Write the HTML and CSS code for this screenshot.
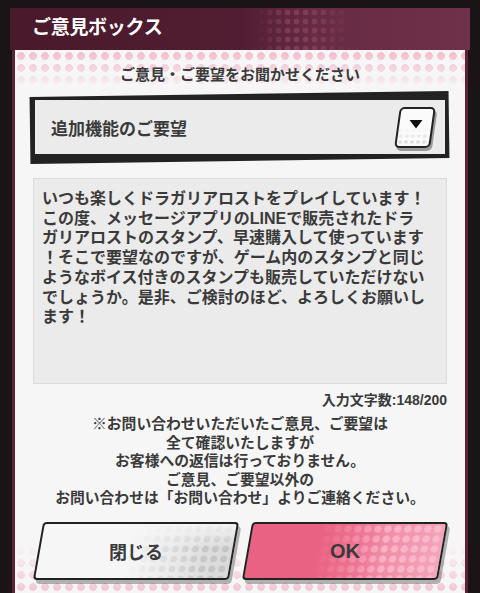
FILE: index.html
```html
<!DOCTYPE html>
<html lang="ja">
<head>
    <meta charset="UTF-8">
    <meta name="viewport" content="width=device-width, initial-scale=1.0">
    <title>ご意見ボックス</title>
    <link rel="stylesheet" href="styles.css">
</head>
<body>
    <div class="dialog">
        <div class="dialog-header">
            <h1>ご意見ボックス</h1>
        </div>

        <div class="dialog-body">
            <div class="content">
                <p class="lead">ご意見・ご要望をお聞かせください</p>

                <div class="select">
                    <div class="select-box">
                        <span>追加機能のご要望</span>
                        <span class="select-arrow">
                            <svg width="15" height="10" viewBox="0 0 15 10"><path d="M1 1h13L7.5 9.5z" fill="#111"/></svg>
                        </span>
                    </div>
                </div>

                <div class="message">いつも楽しくドラガリアロストをプレイしています！<br>この度、メッセージアプリのLINEで販売されたドラ<br>ガリアロストのスタンプ、早速購入して使っています<br>！そこで要望なのですが、ゲーム内のスタンプと同じ<br>ようなボイス付きのスタンプも販売していただけない<br>でしょうか。是非、ご検討のほど、よろしくお願いし<br>ます！</div>

                <p class="counter">入力文字数:148/200</p>

                <p class="notice">
                    ※お問い合わせいただいたご意見、ご要望は<br>
                    全て確認いたしますが<br>
                    お客様への返信は行っておりません。<br>
                    ご意見、ご要望以外の<br>
                    お問い合わせは「お問い合わせ」よりご連絡ください。
                </p>

                <div class="actions">
                    <button class="btn btn-close"><span>閉じる</span></button>
                    <button class="btn btn-ok"><span>OK</span></button>
                </div>
            </div>
        </div>
    </div>
</body>
</html>
```

FILE: styles.css
```css
* {
    margin: 0;
    padding: 0;
    box-sizing: border-box;
}

body {
    width: 480px;
    height: 593px;
    overflow: hidden;
    background: #1b1416;
    font-family: "Liberation Sans", "Noto Sans CJK JP", sans-serif;
    font-weight: 700;
    color: #3a3a3a;
}

.dialog {
    margin: 8px 10px 0;
}

.dialog-header {
    position: relative;
    height: 42px;
    padding-left: 22px;
    overflow: hidden;
    background: linear-gradient(90deg, #491a2b 0%, #511d32 50%, #682b44 66%, #6f3049 100%);
    color: #fff;
}

.dialog-header h1 {
    position: relative;
    z-index: 1;
    font-size: 19px;
    line-height: 40px;
    letter-spacing: -0.3px;
}

.dialog-header::after {
    content: '';
    position: absolute;
    left: 246px;
    top: 0;
    width: 96px;
    height: 100%;
    background: radial-gradient(circle, #7e3c58 0 2.6px, transparent 3.2px) 0 0 / 9px 9px;
    -webkit-mask-image: linear-gradient(90deg, transparent, #000 35%, #000 65%, transparent);
    mask-image: linear-gradient(90deg, transparent, #000 35%, #000 65%, transparent);
}

.dialog-body {
    position: relative;
    height: 543px;
    margin: 0 2px;
    padding: 15px 18px 0;
    overflow: hidden;
    background: #f6f6f6;
    border-left: 3px solid #5b2139;
    border-right: 3px solid #5b2139;
}

.dialog-body::before,
.dialog-body::after {
    content: '';
    position: absolute;
    left: 0;
    right: 0;
    background: radial-gradient(circle, #f2c0d0 0 3.6px, transparent 4.2px) 0 0 / 12px 12px;
}

.dialog-body::before {
    top: 0;
    height: 40px;
    -webkit-mask-image: linear-gradient(180deg, #000 10%, transparent);
    mask-image: linear-gradient(180deg, #000 10%, transparent);
}

.dialog-body::after {
    bottom: 0;
    height: 48px;
    -webkit-mask-image: linear-gradient(0deg, rgba(0, 0, 0, 0.8) 10%, transparent);
    mask-image: linear-gradient(0deg, rgba(0, 0, 0, 0.8) 10%, transparent);
}

.content {
    position: relative;
    z-index: 1;
}

.lead {
    font-size: 15px;
    line-height: 20px;
    text-align: center;
}

.select {
    position: relative;
    height: 58px;
    margin-top: 13px;
}

.select::before {
    content: '';
    position: absolute;
    top: -4px;
    bottom: -5px;
    left: -3px;
    right: -2px;
    background: #222;
    transform: rotate(-0.8deg);
}

.select-box {
    position: relative;
    height: 100%;
    display: flex;
    align-items: center;
    justify-content: space-between;
    padding: 0 12px 0 16px;
    background: #ebebeb;
    border: 2px solid #222;
    font-size: 17px;
}

.select-arrow {
    width: 36px;
    height: 41px;
    display: flex;
    align-items: center;
    justify-content: center;
    background:
        linear-gradient(180deg, #fbfbfb 50%, rgba(251, 251, 251, 0) 100%),
        radial-gradient(circle, rgba(185, 185, 185, 0.55) 0 1.6px, transparent 2.1px) 0 0 / 6px 6px,
        #fbfbfb;
    border: 2.5px solid #222;
    border-radius: 5px;
    transform: skewX(-8deg);
    box-shadow: 2px 3px 0 #9a9a9a;
}

.select-arrow svg {
    transform: skewX(8deg);
    margin-top: -7px;
}

.message {
    height: 206px;
    margin-top: 22px;
    padding: 10px 8px 6px;
    background: #ebebeb;
    border: 1px solid #dcdcdc;
    font-size: 16px;
    line-height: 19.7px;
    white-space: nowrap;
}

.counter {
    margin-top: 7px;
    font-size: 14px;
    line-height: 18px;
    text-align: right;
}

.notice {
    margin-top: 6px;
    font-size: 14.8px;
    line-height: 18.5px;
    text-align: center;
}

.actions {
    display: flex;
    gap: 13px;
    margin-top: 14px;
    padding: 0 5px;
}

.btn {
    flex: 1;
    height: 58px;
    border: 2.5px solid #222;
    border-radius: 4px;
    transform: skewX(-10deg);
    box-shadow: 3px 4px 0 rgba(0, 0, 0, 0.28);
    font-family: inherit;
    font-weight: 700;
    font-size: 18px;
    color: #3a3a3a;
}

.btn span {
    display: inline-block;
    transform: skewX(10deg);
}

.btn-close {
    background:
        linear-gradient(90deg, #f6f6f6 45%, rgba(240, 240, 240, 0) 85%),
        linear-gradient(180deg, rgba(246, 246, 246, 0.9) 0%, rgba(246, 246, 246, 0) 45%),
        radial-gradient(circle, rgba(170, 170, 170, 0.45) 0 3.2px, transparent 3.8px) 0 0 / 10px 10px,
        linear-gradient(90deg, #f4f4f4 0%, #e6e6e6 60%, #d9d9d9 100%);
}

.btn-ok {
    font-size: 20px;
    background:
        linear-gradient(90deg, #ea6283 35%, rgba(236, 110, 140, 0) 70%),
        radial-gradient(circle, rgba(255, 200, 218, 0.6) 0 3.4px, transparent 4px) 0 0 / 10px 10px,
        linear-gradient(90deg, #e85a7c 0%, #ee7d98 50%, #f3a5ba 100%);
}
```
